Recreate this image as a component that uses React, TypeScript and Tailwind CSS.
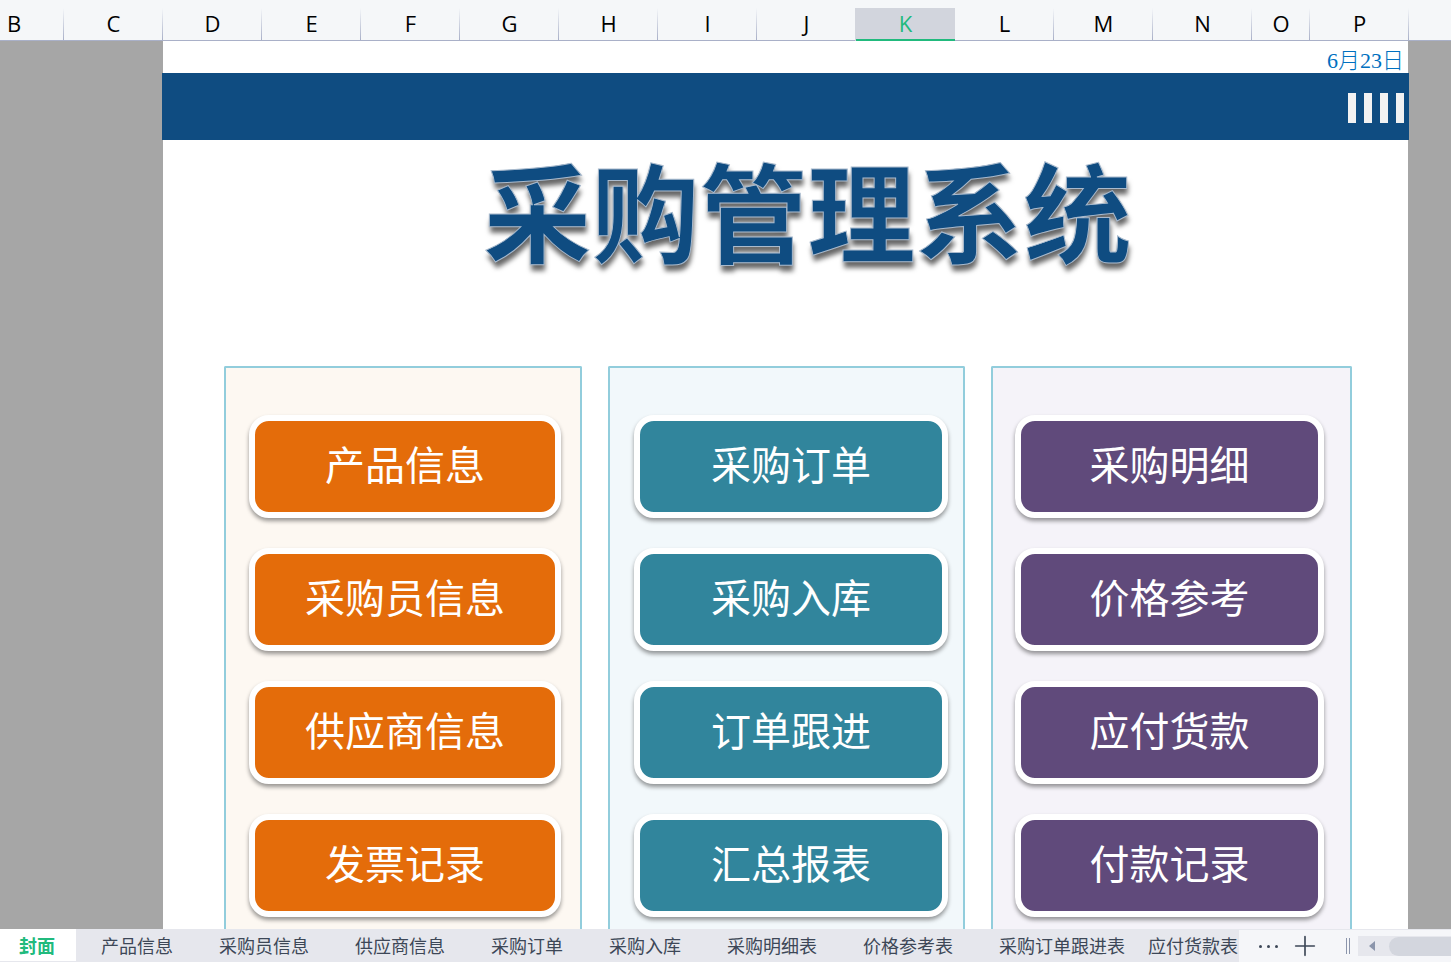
import { Plus } from "lucide-react";
import clsx from "clsx";

const columns = [
    { name: "B", size: "w-16 pr-9" },
    { name: "C", size: "w-[99px]" },
    { name: "D", size: "flex-[99]" },
    { name: "E", size: "flex-[99]" },
    { name: "F", size: "flex-[99]" },
    { name: "G", size: "flex-[99]" },
    { name: "H", size: "flex-[99]" },
    { name: "I", size: "flex-[99]" },
    { name: "J", size: "flex-[99]" },
    { name: "K", size: "flex-[99]", selected: true },
    { name: "L", size: "flex-[99]" },
    { name: "M", size: "flex-[99]" },
    { name: "N", size: "flex-[99]" },
    { name: "O", size: "flex-[58]" },
    { name: "P", size: "flex-[99]" },
];

const groups = [
    {
        panel: "bg-[#fdf8f2] pl-[23px] pr-[19px]",
        button: "bg-[#e46c0a]",
        items: ["产品信息", "采购员信息", "供应商信息", "发票记录"],
    },
    {
        panel: "bg-[#f2f8fb] pl-6 pr-[15px]",
        button: "bg-[#31859c]",
        items: ["采购订单", "采购入库", "订单跟进", "汇总报表"],
    },
    {
        panel: "bg-[#f5f3f9] pl-[22px] pr-[26px]",
        button: "bg-[#604a7b]",
        items: ["采购明细", "价格参考", "应付货款", "付款记录"],
    },
];

const sheets = [
    "产品信息",
    "采购员信息",
    "供应商信息",
    "采购订单",
    "采购入库",
    "采购明细表",
    "价格参考表",
    "采购订单跟进表",
];

export default function App() {
    return (
        <div className="flex h-screen flex-col overflow-hidden bg-white font-['Noto_Sans_CJK_SC',sans-serif]">
            <ColumnHeader />
            <div className="flex min-h-0 flex-1 bg-[#a6a6a6] pl-[163px] pr-[43px]">
                <Cover />
            </div>
            <SheetBar />
        </div>
    );
}

function ColumnHeader() {
    return (
        <div className="flex h-[41px] shrink-0 border-b border-[#a9b0c8] bg-[#f5f7f9] pr-[42px] pt-2 font-['Open_Sans','Noto_Sans',sans-serif] text-[22px] leading-[30px] text-black">
            {columns.map(({ name, size, selected }) => (
                <button
                    key={name}
                    className={clsx(
                        "relative flex h-8 min-w-0 shrink-0 justify-center",
                        size,
                        selected &&
                            "h-[33px] border-b-2 border-[#21ba7d] bg-[#d2d5dd] text-[#21ba7d] shadow-[-1px_0_0_#d2d5dd]"
                    )}
                >
                    {name}
                    {!selected && (
                        <span className="absolute inset-y-0 right-0 w-px bg-gradient-to-b from-[#f5f7f9] to-[#a9b0c8]" />
                    )}
                </button>
            ))}
        </div>
    );
}

function Cover() {
    return (
        <main className="flex min-w-0 flex-1 flex-col bg-white">
            <div className="h-8 shrink-0 pr-1 pt-1 text-right font-['Liberation_Serif','Noto_Sans_CJK_SC',serif] text-[22px] font-light leading-8 text-[#0070c0]">
                6月23日
            </div>

            {/* Banner */}
            <div className="-mx-px flex h-[67px] shrink-0 items-center justify-end gap-2 bg-[#0f4c81] pr-[5px] pt-0.5">
                <span className="h-[30px] w-2 bg-[#f2f2f2]" />
                <span className="h-[30px] w-2 bg-[#f2f2f2]" />
                <span className="h-[30px] w-2 bg-[#f2f2f2]" />
                <span className="h-[30px] w-2 bg-[#f2f2f2]" />
            </div>

            <h1 className="h-[226px] shrink-0 pl-11 text-center text-[108px] font-bold leading-[136px] text-[#0f4c81] [-webkit-text-stroke:1px_#a9bacd] [text-shadow:1px_6px_5px_rgba(0,0,0,0.6)]">
                采购管理系统
            </h1>

            {/* Navigation panels */}
            <nav className="grid min-h-0 flex-1 grid-cols-[358fr_357fr_361fr] gap-[26px] pl-[61px] pr-14">
                {groups.map((group) => (
                    <section
                        key={group.items[0]}
                        className={clsx(
                            "flex min-w-0 flex-col gap-[31px] rounded-t-xs border-2 border-b-0 border-[#92cddc] pt-[47px]",
                            group.panel
                        )}
                    >
                        {group.items.map((item) => (
                            <button
                                key={item}
                                className={clsx(
                                    "h-[103px] shrink-0 rounded-[20px] border-6 border-white pb-2 text-[40px] leading-none text-white shadow-[0_3px_4px_rgba(0,0,0,0.4)] not-first:-mt-px",
                                    group.button
                                )}
                            >
                                {item}
                            </button>
                        ))}
                    </section>
                ))}
            </nav>
        </main>
    );
}

function SheetBar() {
    return (
        <footer className="flex h-[33px] shrink-0 bg-[#e6e7ed] text-lg leading-8 text-[#3d4757]">
            <div className="flex min-w-0 flex-1 overflow-hidden whitespace-nowrap">
                <button className="mr-0.5 h-8 w-[76px] shrink-0 bg-white pr-0.5 font-bold text-[#21ba7d]">封面</button>
                {sheets.map((sheet) => (
                    <button key={sheet} className="h-8 shrink-0 px-[23px]">
                        {sheet}
                    </button>
                ))}
                <button className="h-8 shrink-0">应付货款表</button>
            </div>

            <div className="mt-px flex shrink-0 items-center bg-[#f5f6f9]">
                <button aria-label="更多工作表" className="ml-5 flex h-8 items-center gap-[5px]">
                    <span className="size-[3px] rounded-full bg-[#3d4757]" />
                    <span className="size-[3px] rounded-full bg-[#3d4757]" />
                    <span className="size-[3px] rounded-full bg-[#3d4757]" />
                </button>
                <button aria-label="新建工作表" className="ml-[11px]">
                    <Plus className="size-8" strokeWidth={1.25} />
                </button>
                <span className="ml-[25px] h-4 w-1 border-x border-[#8b95ab]" />
                <div className="ml-2 flex h-5 w-[93px] items-center bg-[#e6e7ed]">
                    <button aria-label="向左滚动" className="flex w-[31px] justify-center pr-1">
                        <svg viewBox="0 0 6 10" className="h-2.5 w-1.5 fill-[#8b95ab]">
                            <path d="M6 0v10L0 5z" />
                        </svg>
                    </button>
                    <div className="h-[19px] flex-1 rounded-l-full bg-[#d3d6de]" />
                </div>
            </div>
        </footer>
    );
}
